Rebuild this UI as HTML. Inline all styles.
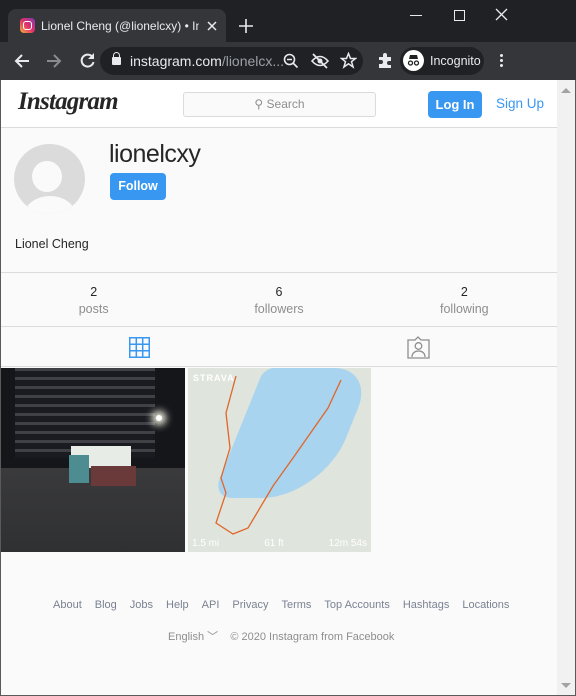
<!DOCTYPE html>
<html><head><meta charset="utf-8"><style>
*{box-sizing:border-box;margin:0;padding:0}
body{width:576px;height:696px;overflow:hidden;background:#fafafa;font-family:"Liberation Sans",sans-serif;position:relative}
.abs{position:absolute}
</style></head><body>
<!-- tab bar -->
<div class="abs" style="left:0;top:0;width:576px;height:42px;background:#202124"></div>
<div class="abs" style="left:8px;top:9px;width:218px;height:34px;background:#35363a;border-radius:8px 8px 0 0"></div>
<div class="abs" style="left:20px;top:18px;width:15px;height:15px;border-radius:4px;background:linear-gradient(45deg,#f9b233,#e1306c,#833ab4)"><div style="margin:3px;width:9px;height:9px;border:1.5px solid #fff;border-radius:3px"></div></div>
<div class="abs" style="left:41px;top:19px;color:#e8eaed;font-size:12px;white-space:nowrap;width:158px;overflow:hidden">Lionel Cheng (@lionelcxy) • Instagram</div>
<svg class="abs" style="left:207px;top:21px" width="10" height="10"><path d="M1 1l8 8M9 1l-8 8" stroke="#e8eaed" stroke-width="1.5"/></svg>
<svg class="abs" style="left:239px;top:19px" width="14" height="14"><path d="M7 0v14M0 7h14" stroke="#e8eaed" stroke-width="1.6"/></svg>
<div class="abs" style="left:410px;top:15px;width:12px;height:1.2px;background:#e8eaed"></div>
<div class="abs" style="left:454px;top:10px;width:11px;height:11px;border:1.2px solid #e8eaed"></div>
<svg class="abs" style="left:495px;top:8px" width="13" height="13"><path d="M1 1l11 11M12 1l-11 11" stroke="#e8eaed" stroke-width="1.3"/></svg>
<!-- toolbar -->
<div class="abs" style="left:0;top:42px;width:576px;height:38px;background:#35363a"></div>
<svg class="abs" style="left:14px;top:53px" width="16" height="16"><path d="M15 8H2M8 2L2 8l6 6" fill="none" stroke="#e8eaed" stroke-width="2"/></svg>
<svg class="abs" style="left:46px;top:53px" width="16" height="16"><path d="M1 8h13M8 2l6 6-6 6" fill="none" stroke="#8a8b8d" stroke-width="2"/></svg>
<svg class="abs" style="left:79px;top:52px" width="17" height="17"><path d="M13.5 5A6 6 0 1 0 14.5 10" fill="none" stroke="#e8eaed" stroke-width="2"/><path d="M15 1v6h-6z" fill="#e8eaed"/></svg>
<div class="abs" style="left:100px;top:47px;width:263px;height:28px;background:#202124;border-radius:14px"></div>
<div class="abs" style="left:112px;top:57px;width:9px;height:8px;background:#e8eaed;border-radius:1px"></div>
<div class="abs" style="left:113px;top:52px;width:7px;height:7px;border:1.5px solid #e8eaed;border-radius:4px 4px 0 0"></div>
<div class="abs" style="left:130px;top:53px;font-size:14px;color:#e8eaed;white-space:nowrap">instagram.com<span style="color:#9aa0a6">/lionelcx...</span></div>
<svg class="abs" style="left:283px;top:53px" width="16" height="16"><circle cx="6.5" cy="6.5" r="5" fill="none" stroke="#e8eaed" stroke-width="1.6"/><path d="M10 10l4.5 4.5M4 6.5h5" stroke="#e8eaed" stroke-width="1.6"/></svg>
<svg class="abs" style="left:311px;top:53px" width="18" height="16"><path d="M1 8q8-9 16 0q-8 9-16 0z" fill="none" stroke="#e8eaed" stroke-width="1.6"/><circle cx="9" cy="8" r="2.5" fill="#e8eaed"/><path d="M2 1l14 14" stroke="#e8eaed" stroke-width="1.8"/></svg>
<svg class="abs" style="left:340px;top:52px" width="17" height="17"><path d="M8.5 1.5l2 5h5l-4 3.2 1.6 5.3-4.6-3.2-4.6 3.2 1.6-5.3-4-3.2h5z" fill="none" stroke="#e8eaed" stroke-width="1.5"/></svg>
<svg class="abs" style="left:377px;top:52px" width="17" height="17"><path d="M2 5h4V3a2 2 0 0 1 4 0v2h4v4h-2a2 2 0 0 0 0 4h2v3H2v-4h2a2 2 0 0 0 0-4H2z" fill="#e8eaed"/></svg>
<div class="abs" style="left:400px;top:47px;width:84px;height:28px;background:#202124;border-radius:14px"></div>
<div class="abs" style="left:403px;top:50px;width:21px;height:21px;background:#fff;border-radius:50%"></div>
<svg class="abs" style="left:403px;top:50px" width="21" height="21"><path d="M6 9h9l-1-4h-7z" fill="#202124"/><circle cx="7.5" cy="13" r="2" fill="none" stroke="#202124" stroke-width="1.3"/><circle cx="13.5" cy="13" r="2" fill="none" stroke="#202124" stroke-width="1.3"/></svg>
<div class="abs" style="left:430px;top:54px;color:#e8eaed;font-size:12.5px">Incognito</div>
<div class="abs" style="left:500px;top:54px;width:3px;height:3px;border-radius:50%;background:#e8eaed;box-shadow:0 5px 0 #e8eaed,0 10px 0 #e8eaed"></div>
<!-- scrollbar -->
<div class="abs" style="left:557px;top:80px;width:18px;height:615px;background:#f1f1f1"></div>
<div class="abs" style="left:561px;top:88px;border:5px solid transparent;border-bottom:5px solid #a3a3a3;border-top:none"></div>
<div class="abs" style="left:561px;top:683px;border:5px solid transparent;border-top:5px solid #a3a3a3;border-bottom:none"></div>
<div class="abs" style="left:0;top:80px;width:576px;height:616px;border:1px solid #5a5a5a;border-top:none"></div>
<!-- header -->
<div class="abs" style="left:1px;top:80px;width:556px;height:48px;background:#fff;border-bottom:1px solid #dbdbdb"></div>
<div class="abs" style="left:18px;top:88px;font-family:'Liberation Serif',serif;font-style:italic;font-weight:bold;font-size:25px;color:#262626;letter-spacing:-0.8px">Instagram</div>
<div class="abs" style="left:183px;top:92px;width:193px;height:25px;background:#fafafa;border:1px solid #dbdbdb;border-radius:3px;color:#8e8e8e;font-size:12px;text-align:center;line-height:23px">⚲ Search</div>
<div class="abs" style="left:428px;top:91px;width:54px;height:27px;background:#3897f0;border-radius:4px;color:#fff;font-weight:bold;font-size:13px;text-align:center;line-height:27px">Log In</div>
<div class="abs" style="left:496px;top:96px;color:#3897f0;font-size:13.5px">Sign Up</div>
<!-- profile -->
<div class="abs" style="left:14px;top:144px;width:71px;height:70px;border-radius:50%;background:#dbdbdb;overflow:hidden">
<div style="position:absolute;left:18px;top:17px;width:30px;height:31px;border-radius:50%;background:#fafafa"></div>
<div style="position:absolute;left:10px;top:52px;width:52px;height:40px;border-radius:50%;background:#fafafa"></div></div>
<div class="abs" style="left:109px;top:140px;font-size:25px;color:#262626;letter-spacing:-0.5px">lionelcxy</div>
<div class="abs" style="left:110px;top:173px;width:56px;height:27px;background:#3897f0;border-radius:4px;color:#fff;font-weight:bold;font-size:12.5px;text-align:center;line-height:27px">Follow</div>
<div class="abs" style="left:15px;top:237px;font-size:12.5px;color:#262626">Lionel Cheng</div>
<div class="abs" style="left:1px;top:272px;width:556px;border-top:1px solid #dbdbdb"></div>
<div class="abs" style="left:1px;top:284px;width:556px;display:flex;font-size:12.5px;text-align:center;line-height:17px">
<div style="flex:1"><span style="color:#262626">2</span><br><span style="color:#8e8e8e">posts</span></div>
<div style="flex:1"><span style="color:#262626">6</span><br><span style="color:#8e8e8e">followers</span></div>
<div style="flex:1"><span style="color:#262626">2</span><br><span style="color:#8e8e8e">following</span></div></div>
<div class="abs" style="left:1px;top:326px;width:556px;border-top:1px solid #dbdbdb"></div>
<svg class="abs" style="left:129px;top:337px" width="21" height="21"><g fill="none" stroke="#3897f0" stroke-width="1.5"><rect x=".75" y=".75" width="19.5" height="19.5"/><path d="M7.3 1v19M13.7 1v19M1 7.3h19M1 13.7h19"/></g></svg>
<svg class="abs" style="left:407px;top:336px" width="23" height="23"><g fill="none" stroke="#8e8e8e" stroke-width="1.3"><path d="M1 4h7l3-3 3 3h8v18H1z"/><circle cx="11.5" cy="10" r="3.3"/><path d="M5 21c0-4 3-6 6.5-6s6.5 2 6.5 6"/></g></svg>
<div class="abs" style="left:1px;top:366px;width:556px;border-top:1px solid #dbdbdb"></div>
<!-- photos -->
<div class="abs" style="left:1px;top:368px;width:184px;height:184px;background:#2c2c2e;overflow:hidden">
<div style="position:absolute;left:0;top:0;width:184px;height:100px;background:#15161a"></div>
<div style="position:absolute;left:14px;top:0;width:140px;height:90px;background:repeating-linear-gradient(180deg,#3f4146 0 3px,#1a1b20 3px 9px)"></div>
<div style="position:absolute;left:0;top:100px;width:184px;height:84px;background:linear-gradient(180deg,#3a3a3c,#2f3032)"></div>
<div style="position:absolute;left:70px;top:78px;width:60px;height:22px;background:#e8ece6"></div>
<div style="position:absolute;left:68px;top:87px;width:20px;height:28px;background:#4d8c90"></div>
<div style="position:absolute;left:90px;top:98px;width:45px;height:20px;background:#6a3a3a"></div>
<div style="position:absolute;left:155px;top:47px;width:6px;height:6px;border-radius:50%;background:#fff;box-shadow:0 0 8px 4px #ffe"></div>
</div>
<div class="abs" style="left:188px;top:368px;width:183px;height:184px;background:#dfe4dc;overflow:hidden">
<div style="position:absolute;left:50px;top:0;width:110px;height:130px;background:#a9d4ef;border-radius:10px 40px 60px 20px;transform:skewX(-22deg)"></div>
<div style="position:absolute;left:5px;top:5px;color:#fff;font-weight:bold;font-size:9px;letter-spacing:1px">STRAVA</div>
<svg style="position:absolute;left:0;top:0" width="183" height="184"><path d="M48 8L38 45 42 80 33 110 38 125 28 155 45 166 60 160 85 118 105 90 140 40 153 12" fill="none" stroke="#e0662a" stroke-width="1.3"/></svg>
<div style="position:absolute;left:4px;top:170px;color:#fff;font-size:10px;width:175px;display:flex;justify-content:space-between"><span>1.5 mi</span><span>61 ft</span><span>12m 54s</span></div>
</div>
<!-- footer -->
<div class="abs" style="left:53px;top:599px;font-size:11px;color:#7a8291;white-space:nowrap">
<span style="margin-right:13px">About</span><span style="margin-right:13px">Blog</span><span style="margin-right:13px">Jobs</span><span style="margin-right:13px">Help</span><span style="margin-right:13px">API</span><span style="margin-right:13px">Privacy</span><span style="margin-right:13px">Terms</span><span style="margin-right:13px">Top Accounts</span><span style="margin-right:13px">Hashtags</span><span>Locations</span></div>
<div class="abs" style="left:168px;top:628px;font-size:11px;color:#8e8e8e;white-space:nowrap">English ﹀ &nbsp;&nbsp;&nbsp;© 2020 Instagram from Facebook</div>
</body></html>
